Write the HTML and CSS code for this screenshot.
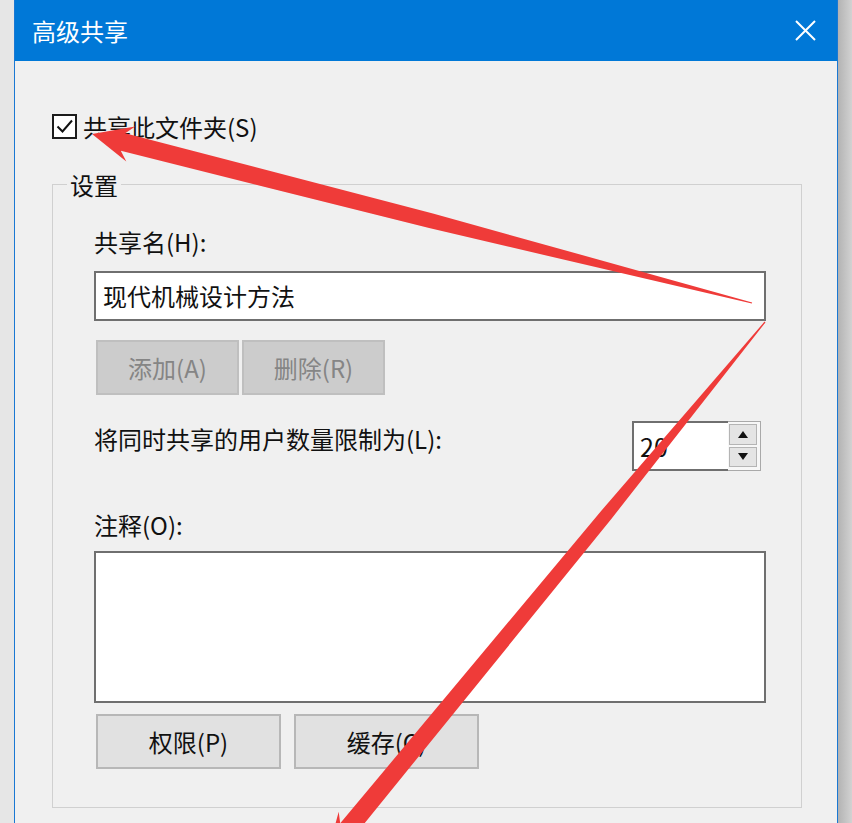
FILE: index.html
```html
<!DOCTYPE html>
<html lang="zh-CN">
<head>
<meta charset="utf-8">
<title>高级共享</title>
<link rel="stylesheet" href="styles.css">
</head>
<body>
<div class="window">
  <div class="titlebar">
    <span class="title">高级共享</span>
    <svg class="close" width="21" height="21" viewBox="0 0 21 21"><path d="M1 1 L20 20 M20 1 L1 20" stroke="#fff" stroke-width="2" fill="none"/></svg>
  </div>
  <div class="content">
    <label class="check-row">
      <span class="checkbox"><svg width="21" height="21" viewBox="0 0 21 21"><path d="M3.5 10.5 L8.5 15.5 L18 4.5" stroke="#111" stroke-width="2" fill="none"/></svg></span>
      <span class="check-text">共享此文件夹(S)</span>
    </label>
    <div class="group">
      <div class="legend">设置</div>
      <div class="field-label name-label">共享名(H):</div>
      <div class="textbox">现代机械设计方法</div>
      <div class="btn-row small-row">
        <button class="btn small disabled">添加(A)</button>
        <button class="btn small disabled">删除(R)</button>
      </div>
      <div class="limit-row">
        <div class="field-label limit-label">将同时共享的用户数量限制为(L):</div>
        <div class="spinner">
          <div class="spin-value">20</div>
          <div class="spin-btns">
            <div class="spin-btn"><svg width="10" height="7" viewBox="0 0 10 7"><path d="M5 0 L10 7 L0 7 Z" fill="#111"/></svg></div>
            <div class="spin-btn"><svg width="10" height="7" viewBox="0 0 10 7"><path d="M0 0 L10 0 L5 7 Z" fill="#111"/></svg></div>
          </div>
        </div>
      </div>
      <div class="field-label note-label">注释(O):</div>
      <div class="textarea"></div>
      <div class="btn-row big-row">
        <button class="btn big">权限(P)</button>
        <button class="btn big">缓存(C)</button>
      </div>
    </div>
  </div>
</div>
<svg class="arrows" width="852" height="823" viewBox="0 0 852 823">
  <polygon fill="#ef3b39" points="92,134 135.2,126.5 125.2,133.2 432.9,213.5 752.15,302.4 751.85,303.6 429.1,228.1 120.8,150.7 126.3,161.4"/>
  <polygon fill="#ef3b39" points="327.2,854 366.5,834.6 354.8,835.3 611.1,519.2 765.46,322.38 764.54,321.62 601.1,511 340.2,823.3 338.7,811.8"/>
</svg>
</body>
</html>
```

FILE: styles.css
```css
html, body {
  margin: 0;
  padding: 0;
  height: 100%;
  overflow: hidden;
}
body {
  position: relative;
  font-family: "Noto Sans CJK SC", "Noto Sans", sans-serif;
  background: linear-gradient(90deg, #e6e6e6 0, #e6e6e6 838px, #b3b3b3 838px, #d2d2d2 852px);
  color: #111;
}
.window {
  margin-left: 14px;
  width: 824px;
  height: 823px;
  box-sizing: border-box;
  border-left: 1px solid #1a78d3;
  border-right: 1px solid #1a78d3;
  background: #f0f0f0;
  display: flex;
  flex-direction: column;
}
.titlebar {
  height: 61px;
  flex: none;
  background: #0078d7;
  display: flex;
  align-items: center;
  justify-content: space-between;
  padding: 0 21px 0 17px;
}
.title {
  color: #fff;
  font-size: 24px;
  line-height: 24px;
}
.close {
  display: block;
}
.content {
  padding: 53px 35px 0 37px;
  display: flex;
  flex-direction: column;
}
.check-row {
  display: flex;
  align-items: center;
  gap: 6px;
  height: 25px;
}
.checkbox {
  width: 25px;
  height: 25px;
  box-sizing: border-box;
  border: 2px solid #1c1c1c;
  background: #fff;
  display: flex;
  align-items: center;
  justify-content: center;
}
.checkbox svg {
  display: block;
}
.check-text {
  font-size: 24px;
  line-height: 24px;
}
.group {
  margin-top: 45px;
  border: 1px solid #d0d0d0;
  padding: 0 35px 38px 41px;
  display: flex;
  flex-direction: column;
}
.legend {
  align-self: flex-start;
  margin: -12px 0 0 -27px;
  padding: 0 3px;
  background: #f0f0f0;
  font-size: 24px;
  line-height: 24px;
}
.field-label {
  font-size: 24px;
  line-height: 24px;
  white-space: nowrap;
}
.name-label {
  margin-top: 33px;
}
.textbox {
  margin-top: 17px;
  height: 50px;
  box-sizing: border-box;
  border: 2px solid #6f6f6f;
  background: #fff;
  padding-left: 7px;
  font-size: 24px;
  line-height: 46px;
}
.btn-row {
  display: flex;
  padding-left: 2px;
}
.small-row {
  margin-top: 19px;
  gap: 3px;
}
.big-row {
  margin-top: 11px;
  gap: 13px;
}
.btn {
  font-family: "Noto Sans CJK SC", "Noto Sans", sans-serif;
  font-size: 24px;
  line-height: 24px;
  height: 55px;
  box-sizing: border-box;
  border: 2px solid #b7b7b7;
  background: #e1e1e1;
  color: #111;
  padding: 0;
  margin: 0;
  display: flex;
  align-items: center;
  justify-content: center;
}
.btn.small {
  width: 143px;
}
.btn.big {
  width: 185px;
}
.btn.disabled {
  background: #cccccc;
  border-color: #bfbfbf;
  color: #858585;
}
.limit-row {
  margin-top: 26px;
  display: flex;
  justify-content: space-between;
  align-items: flex-start;
}
.limit-label {
  margin-top: 6px;
}
.spinner {
  margin-right: 5px;
  width: 129px;
  height: 50px;
  display: flex;
}
.spin-value {
  width: 96px;
  box-sizing: border-box;
  border: 2px solid #6f6f6f;
  border-right: none;
  background: #fff;
  padding-left: 6px;
  font-size: 25px;
  line-height: 46px;
}
.spin-btns {
  flex: 1;
  box-sizing: border-box;
  border: 1px solid #a9a9a9;
  border-left: none;
  background: #f7f7f7;
  padding: 2px 3px 3px 1px;
  display: flex;
  flex-direction: column;
  gap: 2px;
}
.spin-btn {
  flex: 1;
  border: 1px solid #b4b4b4;
  background: #e4e4e4;
  display: flex;
  align-items: center;
  justify-content: center;
}
.spin-btn svg {
  display: block;
}
.note-label {
  margin-top: 42px;
}
.textarea {
  margin-top: 14px;
  height: 152px;
  box-sizing: border-box;
  border: 2px solid #6f6f6f;
  background: #fff;
}
.arrows {
  position: absolute;
  left: 0;
  top: 0;
  pointer-events: none;
}
```
